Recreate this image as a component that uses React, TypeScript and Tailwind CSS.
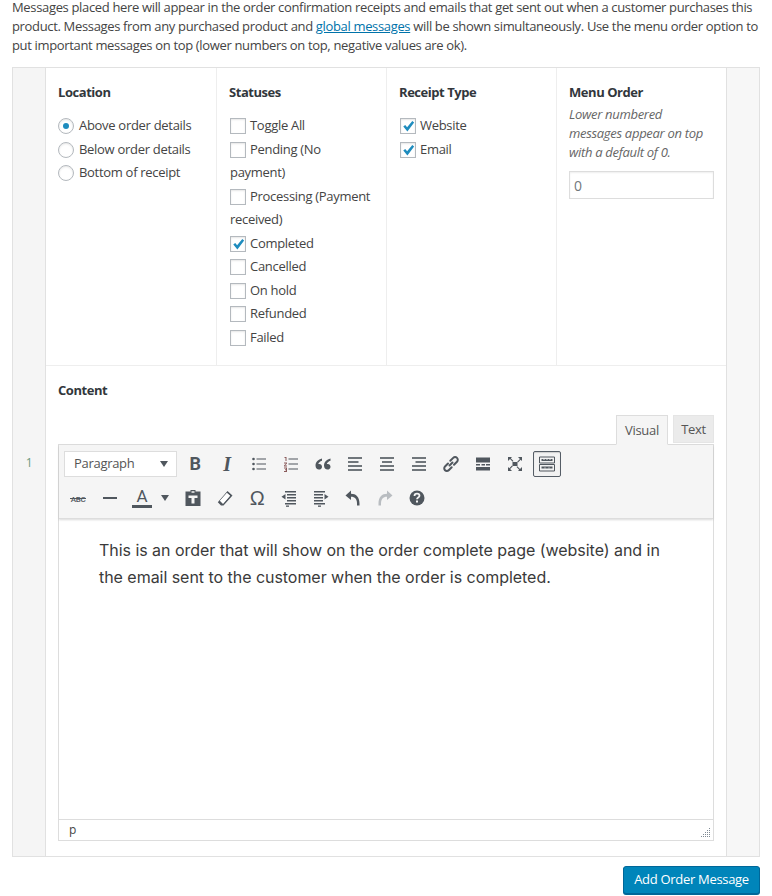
import type { ReactNode } from "react";

const Check = () => (
  <svg viewBox="0 0 16 16" className="absolute left-0 top-0 w-[14px] h-[14px]">
    <path d="M2.600 8.600 L4.800 6.900 L7 9.300 L12.900 2.400 L15 4 L7.300 14.300 Z" fill="#1e8cbe" />
  </svg>
);

const Checkbox = ({ checked = false }: { checked?: boolean }) => (
  <span className="relative inline-block align-[-4px] w-[16px] h-[16px] mr-[4px] border border-[#b4b9be] bg-white shadow-[inset_0_1px_2px_rgba(0,0,0,0.1)]">
    {checked && <Check />}
  </span>
);

const Radio = ({ checked = false }: { checked?: boolean }) => (
  <span className="inline-flex items-center justify-center w-[16px] h-[16px] mr-[5px] rounded-full border border-[#b4b9be] bg-white shadow-[inset_0_1px_2px_rgba(0,0,0,0.1)] shrink-0">
    {checked && <span className="w-[6px] h-[6px] rounded-full bg-[#1e8cbe]" />}
  </span>
);

const Ico = ({ children, w = 20 }: { children: ReactNode; w?: number }) => (
  <svg viewBox="0 0 20 20" width={w} height={20} fill="#50575e" className="block">
    {children}
  </svg>
);

const ToolBtn = ({ children, active = false }: { children: ReactNode; active?: boolean }) => (
  <div
    className={`w-[28px] h-[26px] flex items-center justify-center mr-[4px] rounded-[2px] border ${
      active ? "border-[#555d66] shadow-[inset_0_1px_1px_rgba(0,0,0,0.15)] bg-[#f2f2f2]" : "border-transparent"
    }`}
  >
    {children}
  </div>
);

const dots: [number, number][] = [
  [8, 0], [8, 2], [8, 4], [8, 6], [8, 8], [6, 2], [6, 4], [6, 6], [6, 8], [4, 4], [4, 6], [4, 8], [2, 6], [2, 8], [0, 8],
];

const row1 = [
  <span className="font-['Roboto',sans-serif] font-bold text-[18px] text-[#50575e] leading-none">B</span>,
  <span className="font-['Liberation_Serif',serif] font-bold italic text-[20px] text-[#50575e] leading-none">I</span>,
  <Ico>
    <circle cx="4.500" cy="5" r="1.300" />
    <circle cx="4.500" cy="10" r="1.300" />
    <circle cx="4.500" cy="15" r="1.300" />
    <rect x="7.500" y="4.500" width="9.500" height="1" />
    <rect x="7.500" y="9.500" width="9.500" height="1" />
    <rect x="7.500" y="14.500" width="9.500" height="1" />
  </Ico>,
  <Ico>
    <path d="M3.500 3h2v4H4.500V4h-1zM3 8.500h3v1l-2 2h2v1H3v-1l2-2H3zM3 13.500h3v4.500H3v-1h2v-.8H4v-1h1v-.7H3z" fill="#8a5a5a" />
    <rect x="7.500" y="4.500" width="9.500" height="1" />
    <rect x="7.500" y="9.500" width="9.500" height="1" />
    <rect x="7.500" y="14.500" width="9.500" height="1" />
  </Ico>,
  <Ico>
    <path d="M9 4.500C5.200 5.500 2.500 8 2.500 11.600c0 2.400 1.500 4 3.500 4 1.700 0 3-1.200 3-2.900 0-1.600-1.100-2.800-2.700-2.800-.5 0-.8.100-1 .200.3-1.400 1.700-2.600 3.700-3.300zM17.500 4.500c-3.800 1-6.500 3.500-6.500 7.100 0 2.400 1.500 4 3.500 4 1.700 0 3-1.200 3-2.900 0-1.600-1.100-2.800-2.700-2.800-.5 0-.8.100-1 .200.3-1.400 1.700-2.600 3.700-3.300z" />
  </Ico>,
  <Ico>
    <rect x="3" y="3.200" width="14" height="1.600" />
    <rect x="3" y="7.200" width="10.500" height="1.600" />
    <rect x="3" y="11.200" width="14" height="1.600" />
    <rect x="3" y="15.200" width="14" height="1.600" />
  </Ico>,
  <Ico>
    <rect x="3" y="3.200" width="14" height="1.600" />
    <rect x="5" y="7.200" width="10" height="1.600" />
    <rect x="3" y="11.200" width="14" height="1.600" />
    <rect x="3" y="15.200" width="14" height="1.600" />
  </Ico>,
  <Ico>
    <rect x="3" y="3.200" width="14" height="1.600" />
    <rect x="6.500" y="7.200" width="10.500" height="1.600" />
    <rect x="3" y="11.200" width="14" height="1.600" />
    <rect x="3" y="15.200" width="14" height="1.600" />
  </Ico>,
  <Ico>
    <path
      d="M8.500 11.500l3-3M7 9.500l-3 3a2.600 2.600 0 0 0 3.700 3.700l3-3M9.300 6.800l2.900-2.900a2.600 2.600 0 0 1 3.800 3.800l-3 3"
      fill="none"
      stroke="#50575e"
      strokeWidth="2"
      strokeLinecap="round"
    />
  </Ico>,
  <Ico>
    <rect x="3" y="3.500" width="14" height="5" />
    <rect x="3" y="10" width="4" height="1.500" />
    <rect x="8.500" y="10" width="3.500" height="1.500" />
    <rect x="13" y="10" width="4" height="1.500" />
    <rect x="3" y="13" width="14" height="3.500" />
  </Ico>,
  <Ico>
    <path d="M3 3h4L5.800 4.300 8.500 7 7.700 7.800 5 5.100 3 7zM17 3v4l-1.300-1.200L13 8.500 12.200 7.700 14.900 5 13 3zM3 17v-4l1.300 1.200L7 11.500l.8.8L5.100 15 7 17zM17 17h-4l1.200-1.300L11.500 13l.8-.8L15 14.900 17 13z" />
    <rect x="7.500" y="8" width="5" height="4" />
  </Ico>,
  <Ico>
    <path d="M2.500 3h15v6h-15zM2.500 10.500h15v6.500h-15z" fill="none" stroke="#50575e" strokeWidth="1" />
    <rect x="4.500" y="5" width="11" height="2" />
    <rect x="4.500" y="12.500" width="11" height="2" />
    <g fill="#f2f2f2">
      <rect x="6.500" y="5" width="1" height="1" />
      <rect x="9.500" y="5" width="1" height="1" />
      <rect x="12.500" y="5" width="1" height="1" />
      <rect x="7.500" y="13.500" width="1" height="1" />
      <rect x="11.500" y="13.500" width="1" height="1" />
    </g>
  </Ico>,
];

const row2 = [
  <div className="relative w-[20px] text-center">
    <span className="font-['Roboto',sans-serif] font-medium text-[8px] text-[#50575e] leading-none">ABC</span>
    <span className="absolute left-[2px] right-[2px] top-[50%] h-px bg-[#50575e]" />
  </div>,
  <Ico>
    <rect x="3" y="9" width="14" height="2" />
  </Ico>,
  <div className="flex flex-col items-center">
    <span className="font-['Roboto',sans-serif] text-[17px] text-[#50575e] leading-[17px]">A</span>
    <span className="w-[20px] h-[3px] bg-[#50575e]" />
  </div>,
  <Ico>
    <path
      d="M2.500 3.500h5V2h5v1.500h5V18h-15zM8.500 3.200v1.500h3V3.200zM5.500 7.500v2.500h3v5.500h3V10h3V7.500z"
      fillRule="evenodd"
    />
  </Ico>,
  <Ico>
    <path d="M12.500 3l5 4.500-9 10H6L2.800 14.300zM11.900 5 5 12.800l3 2.900 7-7.900z" fillRule="evenodd" />
    <path d="M5 12.800 11.900 5l3.100 2.800-7 7.900z" fill="#fff" />
  </Ico>,
  <span className="font-['Liberation_Sans',sans-serif] text-[20px] text-[#50575e] leading-none">Ω</span>,
  <Ico>
    <rect x="6" y="3" width="11" height="1.500" />
    <rect x="8" y="6" width="9" height="1.500" />
    <rect x="8" y="9" width="9" height="1.500" />
    <rect x="8" y="12" width="9" height="1.500" />
    <rect x="6" y="15" width="11" height="1.500" />
    <rect x="7" y="17.500" width="3" height="1.300" />
    <path d="M2.500 8.700 6.500 6v5.500z" />
  </Ico>,
  <Ico>
    <rect x="3" y="3" width="11" height="1.500" />
    <rect x="3" y="6" width="9" height="1.500" />
    <rect x="3" y="9" width="9" height="1.500" />
    <rect x="3" y="12" width="9" height="1.500" />
    <rect x="3" y="15" width="11" height="1.500" />
    <rect x="7" y="17.500" width="3" height="1.300" />
    <path d="M17.500 8.700 13.500 6v5.500z" />
  </Ico>,
  <Ico>
    <path d="M2.500 7.500 8 2.500v3.300c5 0 8.500 3.200 8.500 9.700v2h-2.500v-2c0-4-2-6.700-6-6.700v3.200z" />
  </Ico>,
  <Ico>
    <path d="M17.500 7.500 12 2.500v3.300c-5 0-8.500 3.200-8.500 9.700v2H6v-2c0-4 2-6.700 6-6.700v3.200z" fill="#b9bdc1" />
  </Ico>,
  <Ico>
    <circle cx="10" cy="10" r="7.500" />
    <path
      d="M7.500 8c0-1.500 1.100-2.300 2.500-2.300s2.500.8 2.500 2.100c0 1.800-2.500 1.800-2.500 3.500"
      fill="none"
      stroke="#f5f5f5"
      strokeWidth="1.800"
    />
    <rect x="9" y="12.500" width="2" height="2" fill="#f5f5f5" />
  </Ico>,
];

const Caret = () => <span className="w-0 h-0 border-x-[4px] border-x-transparent border-t-[6px] border-t-[#50575e]" />;

const Heading = ({ children }: { children: ReactNode }) => (
  <h4 className="font-bold text-[13px] tracking-[-0.45px] leading-[17px] text-[#32373c]">{children}</h4>
);

const App = () => {
  const statuses: [string, boolean][] = [
    ["Toggle All", false],
    ["Pending (No payment)", false],
    ["Processing (Payment received)", false],
    ["Completed", true],
    ["Cancelled", false],
    ["On hold", false],
    ["Refunded", false],
    ["Failed", false],
  ];

  return (
    <div className="w-[772px] h-[896px] bg-white overflow-hidden font-['Open_Sans',sans-serif] text-[13px] tracking-[-0.3px] text-[#444]">
      <div className="px-[12px]">
        <p className="leading-[19px] mt-[-2px] h-[69px] tracking-[-0.34px]">
          Messages placed here will appear in the order confirmation receipts and emails that get sent out when a customer
          purchases this product. Messages from any purchased product and{" "}
          <a className="text-[#0073aa] underline">global messages</a> will be shown simultaneously. Use the menu order option
          to put important messages on top (lower numbers on top, negative values are ok).
        </p>

        <div className="flex h-[790px] border border-[#e1e1e1]">
          <div className="w-[33px] shrink-0 bg-[#f5f5f5] border-r border-[#e1e1e1] flex items-center justify-center">
            <span className="text-[12px] text-[#6f9a80] mt-[2px]">1</span>
          </div>

          <div className="flex-1 flex flex-col min-w-0">
            <div className="flex h-[298px] border-b border-[#eee]">
              <div className="w-[171px] border-r border-[#eee] pl-[12px] pt-[16px]">
                <Heading>Location</Heading>
                <div className="mt-[13px] flex flex-col">
                  <label className="flex items-center h-[24px]"><Radio checked />Above order details</label>
                  <label className="flex items-center h-[23px]"><Radio />Below order details</label>
                  <label className="flex items-center h-[24px]"><Radio />Bottom of receipt</label>
                </div>
              </div>

              <div className="w-[170px] border-r border-[#eee] pl-[12px] pr-[10px] pt-[16px]">
                <Heading>Statuses</Heading>
                <div className="mt-[13px] pl-px">
                  {statuses.map(([name, on]) => (
                    <label key={name} className="block leading-[23.55px]">
                      <Checkbox checked={on} />
                      {name}
                    </label>
                  ))}
                </div>
              </div>

              <div className="w-[170px] border-r border-[#eee] pl-[12px] pt-[16px]">
                <Heading>Receipt Type</Heading>
                <div className="mt-[12px] pl-px">
                  <label className="block leading-[24px]"><Checkbox checked />Website</label>
                  <label className="block leading-[24px]"><Checkbox checked />Email</label>
                </div>
              </div>

              <div className="flex-1 pl-[12px] pr-[12px] pt-[16px]">
                <Heading>Menu Order</Heading>
                <p className="italic leading-[19px] mt-[4px] text-[#666]">
                  Lower numbered messages appear on top with a default of 0.
                </p>
                <div className="mt-[9px] h-[28px] border border-[#ddd] shadow-[inset_0_1px_2px_rgba(0,0,0,0.07)] px-[4px] flex items-center text-[14px] text-[#72777c]">
                  0
                </div>
              </div>
            </div>

            <div className="flex-1 px-[12px] pt-[16px] flex flex-col">
              <Heading>Content</Heading>

              <div className="flex justify-end items-start gap-[5px] mt-[16px] h-[29px]">
                <div className="relative z-10 h-[30px] w-[52px] pt-px bg-[#f5f5f5] border border-[#ddd] border-b-[#f5f5f5] flex items-center justify-center text-[#555]">
                  Visual
                </div>
                <div className="h-[28px] w-[41px] pt-[2px] bg-[#ebebeb] border border-[#e5e5e5] flex items-center justify-center text-[#555]">
                  Text
                </div>
              </div>

              <div className="border border-[#ddd] flex flex-col h-[397px]">
                <div className="h-[74px] bg-[#f5f5f5] border-b border-[#ddd] shadow-[0_1px_2px_rgba(0,0,0,0.15)] px-[5px] pt-[5px] relative">
                  <div className="flex items-center h-[28px]">
                    <div className="w-[113px] h-[26px] bg-white border border-[#ddd] mr-[4px] pl-[9px] pr-[8px] flex items-center justify-between text-[#555]">
                      Paragraph
                      <Caret />
                    </div>
                    {row1.map((icon, i) => (
                      <ToolBtn key={i} active={i === 11}>{icon}</ToolBtn>
                    ))}
                  </div>
                  <div className="flex items-center h-[28px] mt-[6px]">
                    {row2.slice(0, 3).map((icon, i) => (
                      <ToolBtn key={i}>{icon}</ToolBtn>
                    ))}
                    <div className="ml-[1px] mr-[10px] flex items-center"><Caret /></div>
                    {row2.slice(3).map((icon, i) => (
                      <ToolBtn key={i}>{icon}</ToolBtn>
                    ))}
                  </div>
                </div>

                <div className="flex-1 pl-[40px] pr-[40px] pt-[18px] font-['Inter',sans-serif] text-[16px] tracking-[-0.04px] leading-[27px] text-[#3a3a3a]">
                  This is an order that will show on the order complete page (website) and in the email sent to the customer when the
                  order is completed.
                </div>

                <div className="relative h-[21px] border-t border-[#ddd] pl-[10px] flex items-center text-[12px] text-[#444]">
                  p
                  <svg viewBox="0 0 10 10" className="absolute right-[2px] bottom-[2px] w-[10px] h-[10px]" fill="#7e8993">
                    {dots.map(([y, x], i) => (
                      <rect key={i} x={x} y={y} width={1} height={1} />
                    ))}
                  </svg>
                </div>
              </div>
            </div>
          </div>

          <div className="w-[33px] shrink-0 bg-[#f7f7f7] border-l border-[#e1e1e1]" />
        </div>

        <div className="flex justify-end mt-[9px]">
          <button className="w-[137px] h-[28px] bg-[#0085ba] border border-[#006799] rounded-[3px] shadow-[0_1px_0_#006799] text-white text-[13px]">
            Add Order Message
          </button>
        </div>
      </div>
    </div>
  );
};

export default App;
